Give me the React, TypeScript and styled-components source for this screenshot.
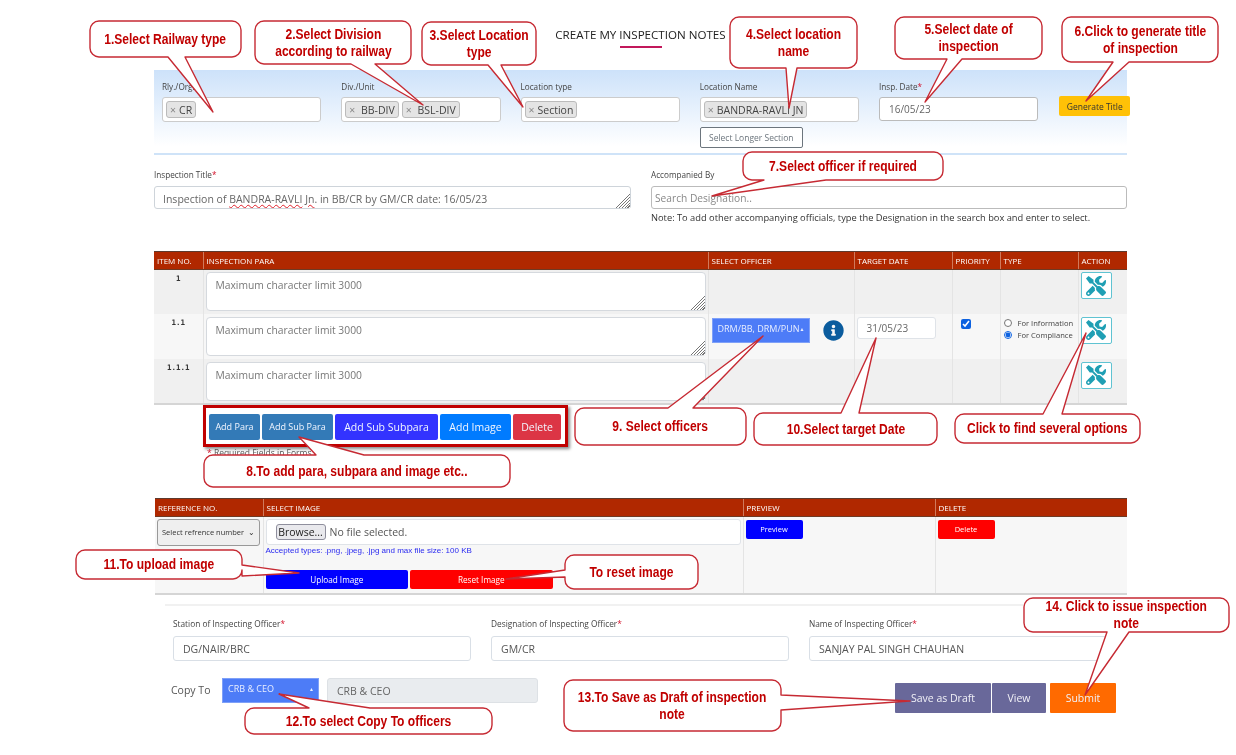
import React from 'react';
import styled, { createGlobalStyle, css } from 'styled-components';
import { FaInfoCircle, FaTools } from 'react-icons/fa';

const GlobalStyle = createGlobalStyle`
  html, body {
    margin: 0;
    padding: 0;
    background: #fff;
  }
  * {
    box-sizing: border-box;
  }
`;

const uiFont = `"Open Sans", "Noto Sans", sans-serif`;

const stripedGrip = css`
  &::-webkit-resizer {
    background: linear-gradient(135deg, #fff 48%, transparent 48%),
      repeating-linear-gradient(135deg, #fff 0 1px, #777 1px 2px);
  }
`;

const Page = styled.div`
  position: relative;
  width: 1236px;
  height: 755px;
  overflow: hidden;
  background: #fff;
  font-family: ${uiFont};
  color: #495057;
  filter: blur(0.5px);
`;

const Content = styled.div`
  width: 973px;
  margin-left: 154px;
`;

const Heading = styled.div`
  height: 70px;
  padding-top: 28px;
  display: flex;
  flex-direction: column;
  align-items: center;
`;

const HeadingText = styled.h1`
  margin: 0;
  font-size: 11.6px;
  line-height: 14px;
  font-weight: 400;
  color: #222;
  white-space: nowrap;
`;

const HeadingRule = styled.div`
  width: 42px;
  height: 2px;
  margin-top: 4px;
  background: #c2185b;
`;

const FilterPanel = styled.section`
  height: 85px;
  padding: 12px 8px 0;
  display: grid;
  grid-template-columns: repeat(5, 159.25px) 71px;
  column-gap: 20px;
  align-items: start;
  background: linear-gradient(#cde2fa, #fff 92%);
  border-bottom: 2px solid #cfe3f8;
`;

const Label = styled.label`
  display: block;
  height: 10px;
  margin-bottom: 5px;
  font-size: 8.2px;
  line-height: 10px;
  color: #444;
  white-space: nowrap;
`;

const Req = styled.span`
  color: #d3112a;
`;

const ChipBox = styled.div`
  height: 25px;
  padding: 3px;
  display: flex;
  gap: 3px;
  background: #fff;
  border: 1px solid #ccc;
  border-radius: 3px;
`;

const Chip = styled.span`
  height: 17px;
  padding: 0 3px;
  display: inline-flex;
  align-items: center;
  gap: 3px;
  background: #e4e4e4;
  border: 1px solid #bbb;
  border-radius: 3px;
  font-size: 10.5px;
  color: #444;
  white-space: nowrap;

  i {
    font-style: normal;
    color: #888;
  }
`;

const DateBox = styled.div`
  height: 24px;
  padding-left: 9px;
  display: flex;
  align-items: center;
  background: #fff;
  border: 1px solid #bbb;
  border-radius: 3px;
  font-size: 10px;
  color: #666;
`;

const LongerButton = styled.button`
  display: block;
  width: 103px;
  height: 21px;
  margin-top: 5px;
  padding: 0;
  background: #fff;
  border: 1px solid #6c757d;
  border-radius: 2px;
  font: 8.5px ${uiFont};
  color: #6c757d;
`;

const GenerateButton = styled.button`
  width: 71px;
  height: 20px;
  margin: 14px 0 0 1px;
  padding: 0;
  background: #ffc107;
  border: 0;
  border-radius: 2px;
  font: 8.5px ${uiFont};
  color: #333;
`;

const TitleRow = styled.section`
  margin-top: 15px;
  display: grid;
  grid-template-columns: 477px 476px;
  column-gap: 20px;
`;

const TitleLabel = styled(Label)`
  margin-bottom: 6px;
`;

const TitleBox = styled.div`
  height: 23px;
  padding: 0 8px;
  line-height: 25px;
  background: #fff;
  border: 1px solid #ced4da;
  border-radius: 3px;
  font-size: 10.5px;
  color: #666;
  overflow: hidden;
  resize: both;
  white-space: nowrap;
  ${stripedGrip}
`;

const Misspelt = styled.span`
  text-decoration: underline wavy #e0202a 1px;
`;

const SearchBox = styled.div`
  height: 23px;
  padding-left: 3px;
  display: flex;
  align-items: center;
  background: #fff;
  border: 1px solid #bbb;
  border-radius: 3px;
  font-size: 10.2px;
  color: #888;
`;

const Note = styled.div`
  height: 13px;
  padding-top: 3px;
  font-size: 9.3px;
  line-height: 11px;
  color: #333;
  white-space: nowrap;
`;

const Grid = styled.table`
  table-layout: fixed;
  border-collapse: collapse;
  background: #f7f7f7;
  border-bottom: 2px solid #d5d5d5;
`;

const ParaGrid = styled(Grid)`
  width: 973px;
  margin-top: 29px;
`;

const HeadCell = styled.th`
  height: 18px;
  padding: 0 3px;
  background: #b02800;
  border-top: 1px solid #5d3a2e;
  border-left: 1px solid #d07a5c;
  border-bottom: 1px solid #6e3a24;
  font-size: 8px;
  font-weight: 400;
  color: #fff;
  text-align: left;
  white-space: nowrap;

  &:first-child {
    border-left: 0;
  }
`;

const ParaRow = styled.tr<{ $shade?: boolean; $h: number; $inset: number }>`
  --inset: ${(p) => p.$inset}px;
  height: ${(p) => p.$h}px;
  background: ${(p) => (p.$shade ? '#f0f0f0' : '#f7f7f7')};
`;

const Cell = styled.td`
  padding: var(--inset, 2px) 2px 2px;
  vertical-align: top;
  border-left: 1px solid #e4e4e4;
  font-size: 8px;

  &:first-child {
    border-left: 0;
  }
`;

const ItemCell = styled(Cell)`
  padding-top: 4px;
  font-family: "DejaVu Sans Mono", monospace;
  font-size: 7.5px;
  font-weight: 700;
  color: #333;
  text-align: center;
`;

const ParaArea = styled.textarea`
  display: block;
  width: 500px;
  height: 39px;
  padding: 5px 9px;
  background: #fff;
  border: 1px solid #d5d9de;
  border-radius: 4px;
  font: 10.3px ${uiFont};
  ${stripedGrip}

  &::placeholder {
    color: #777;
    opacity: 1;
  }
`;

const OfficerCell = styled(Cell)`
  padding: 4px 3px 0 3px;
`;

const OfficerWrap = styled.div`
  display: flex;
  align-items: center;
  gap: 13px;
`;

const PickerButton = styled.button<{ $w: number }>`
  width: ${(p) => p.$w}px;
  height: 25px;
  padding: 0 4px 0 5px;
  display: flex;
  align-items: flex-start;
  justify-content: space-between;
  background: #4d7cf7;
  border: 1px solid #7ea0f8;
  font: 9px/19px ${uiFont};
  color: #e8eeff;
  white-space: nowrap;

  span:last-child {
    flex: none;
    font-size: 5px;
    line-height: 21px;
  }
`;

const DateInput = styled.div`
  width: 79px;
  height: 22px;
  padding-left: 9px;
  display: flex;
  align-items: center;
  background: #fff;
  border: 1px solid #dfe3e8;
  border-radius: 3px;
  font-size: 10px;
  color: #666;
`;

const PriorityCell = styled(Cell)`
  padding: 5px 0 0 8px;
`;

const PriorityBox = styled.input`
  display: block;
  width: 10px;
  height: 10px;
  margin: 0;
  accent-color: #0d62e0;
`;

const TypeOption = styled.label`
  height: 12.5px;
  display: flex;
  align-items: center;
  gap: 6px;
  font-size: 7.6px;
  color: #444;
  white-space: nowrap;

  input {
    width: 8px;
    height: 8px;
    margin: 0;
    accent-color: #0d62e0;
  }
`;

const TypeCell = styled(Cell)`
  padding: 3px 0 0 3px;
`;

const ToolButton = styled.button`
  width: 31px;
  height: 27px;
  padding: 0;
  display: flex;
  align-items: center;
  justify-content: center;
  background: #fff;
  border: 1px solid #5fc3d2;
  border-radius: 2px;
  color: #1f9fb4;
  font-size: 20px;
`;

const Toolbar = styled.div`
  width: 365px;
  height: 42px;
  margin-left: 49px;
  padding: 6px 3px;
  display: flex;
  gap: 2px;
  background: #fff;
  border: 3px solid #c00000;
  box-shadow: 2px 2px 3px #8a8a8a;
`;

const ActionButton = styled.button<{ $w: number; $bg: string; $size: number }>`
  width: ${(p) => p.$w}px;
  height: 26px;
  padding: 0;
  flex: none;
  background: ${(p) => p.$bg};
  border: 0;
  border-radius: 2px;
  font: ${(p) => p.$size}px ${uiFont};
  color: #f2f6ff;
`;

const Required = styled.div`
  height: 11px;
  margin-left: 53px;
  font-size: 8.5px;
  line-height: 11px;
  color: #555;
`;

const ImageGrid = styled(Grid)`
  width: 972px;
  margin: 40px 0 0 1px;
`;

const ImageRow = styled.tr`
  height: 78px;
`;

const RefSelect = styled.div`
  width: 103px;
  height: 27px;
  padding: 0 4px;
  display: flex;
  align-items: center;
  justify-content: space-between;
  background: #efefef;
  border: 1px solid #999;
  border-radius: 3px;
  font-size: 7.5px;
  color: #333;
  white-space: nowrap;
`;

const FileBox = styled.div`
  height: 26px;
  padding-left: 9px;
  display: flex;
  align-items: center;
  gap: 4px;
  background: #fff;
  border: 1px solid #dfe3e8;
  border-radius: 3px;
  font-size: 10.5px;
  color: #555;
`;

const BrowseButton = styled.button`
  width: 50px;
  height: 16px;
  padding: 0;
  background: #e9e9ed;
  border: 1px solid #8f8f9d;
  border-radius: 3px;
  font: 10.5px ${uiFont};
  color: #222;
`;

const Accepted = styled.div`
  height: 25px;
  padding-top: 1px;
  font-family: "Liberation Sans", sans-serif;
  font-size: 8px;
  line-height: 10px;
  color: #2a2af0;
`;

const UploadRow = styled.div`
  display: flex;
  gap: 2px;
`;

const WideButton = styled.button<{ $bg: string }>`
  width: 142.5px;
  height: 19px;
  padding: 0;
  background: ${(p) => p.$bg};
  border: 0;
  border-radius: 2px;
  font: 8.2px ${uiFont};
  color: #fff;
`;

const SmallButton = styled.button<{ $bg: string }>`
  display: block;
  width: 57px;
  height: 19px;
  margin: 1px 0 0;
  padding: 0;
  background: ${(p) => p.$bg};
  border: 0;
  border-radius: 2px;
  font: 7.5px ${uiFont};
  color: #fff;
`;

const Divider = styled.hr`
  height: 2px;
  margin: 9px 0 0 11px;
  background: #f1f1f1;
  border: 0;
`;

const OfficerRow = styled.section`
  margin-top: 13px;
  padding-left: 19px;
  display: grid;
  grid-template-columns: repeat(3, 298px);
  column-gap: 20px;
`;

const OfficerLabel = styled(Label)`
  margin-bottom: 7px;
  font-size: 8.3px;
`;

const TextBox = styled.div`
  height: 25px;
  padding-left: 9px;
  display: flex;
  align-items: center;
  background: #fff;
  border: 1px solid #d9dfe6;
  border-radius: 3px;
  font-size: 10.5px;
  color: #555;
  white-space: nowrap;
`;

const CopyRow = styled.section`
  margin-top: 17px;
  padding: 0 11px 0 17px;
  display: flex;
  align-items: flex-start;
`;

const CopyLabel = styled.span`
  width: 51px;
  font-size: 10.5px;
  line-height: 25px;
  color: #555;
`;

const CopyValue = styled.div`
  width: 211px;
  height: 25px;
  margin-left: 8px;
  padding-left: 9px;
  display: flex;
  align-items: center;
  background: #e9ecef;
  border: 1px solid #dde1e5;
  border-radius: 3px;
  font-size: 10.5px;
  color: #666;
`;

const FormActions = styled.div`
  margin: 5px 0 0 auto;
  display: flex;
`;

const FormButton = styled.button<{ $w: number; $bg: string; $gap?: number }>`
  width: ${(p) => p.$w}px;
  height: 30px;
  margin-left: ${(p) => p.$gap ?? 0}px;
  padding: 0;
  background: ${(p) => p.$bg};
  border: 0;
  border-radius: 1px;
  font: 10.5px ${uiFont};
  color: #f1f1f7;
`;

/* callouts lie over the form, each one is drawn as a single shape with its tail */
const Annotations = styled.div`
  position: absolute;
  inset: 0;
  pointer-events: none;
`;

const Bubble = styled.div<{ $x: number; $y: number; $w: number; $h: number }>`
  position: absolute;
  left: ${(p) => p.$x}px;
  top: ${(p) => p.$y}px;
  width: ${(p) => p.$w}px;
  height: ${(p) => p.$h}px;
  display: flex;
  align-items: center;
  justify-content: center;

  svg {
    position: absolute;
    left: 0;
    top: 0;
    overflow: visible;
  }
`;

const BubbleText = styled.div`
  position: relative;
  flex: none;
  width: 130%;
  transform: scaleX(0.86);
  font-family: "Liberation Sans", Arial, sans-serif;
  font-size: 14px;
  font-weight: 700;
  line-height: 17px;
  color: #c00000;
  text-align: center;
`;

type Tail = {
  side: 'top' | 'right' | 'bottom' | 'left';
  from: number;
  to: number;
  tip: [number, number];
};

type Note = {
  x: number;
  y: number;
  w: number;
  h: number;
  text: React.ReactNode;
  tail?: Tail;
};

const notes: Note[] = [
  { x: 90, y: 21, w: 151, h: 36, text: '1.Select Railway type', tail: { side: 'bottom', from: 168, to: 185, tip: [213, 112] } },
  { x: 255, y: 21, w: 156, h: 43, text: <>2.Select Division<br />according to railway</>, tail: { side: 'bottom', from: 351, to: 375, tip: [423, 105] } },
  { x: 422, y: 22, w: 114, h: 43, text: <>3.Select Location<br />type</>, tail: { side: 'bottom', from: 488, to: 501, tip: [523, 107] } },
  { x: 730, y: 17, w: 127, h: 51, text: <>4.Select location<br />name</>, tail: { side: 'bottom', from: 786, to: 797, tip: [789, 108] } },
  { x: 895, y: 17, w: 147, h: 42, text: <>5.Select date of<br />inspection</>, tail: { side: 'bottom', from: 947, to: 962, tip: [925, 102] } },
  { x: 1062, y: 17, w: 156, h: 45, text: <>6.Click to generate title<br />of inspection</>, tail: { side: 'bottom', from: 1113, to: 1129, tip: [1086, 101] } },
  { x: 743, y: 152, w: 200, h: 28, text: '7.Select officer if required', tail: { side: 'bottom', from: 764, to: 826, tip: [712, 196] } },
  { x: 204, y: 455, w: 306, h: 32, text: '8.To add para, subpara and image etc..', tail: { side: 'top', from: 316, to: 364, tip: [299, 437] } },
  { x: 575, y: 408, w: 171, h: 37, text: '9. Select officers', tail: { side: 'top', from: 668, to: 693, tip: [763, 336] } },
  { x: 754, y: 413, w: 183, h: 32, text: '10.Select target Date', tail: { side: 'top', from: 841, to: 859, tip: [876, 338] } },
  { x: 955, y: 414, w: 185, h: 29, text: 'Click to find several options', tail: { side: 'top', from: 1043, to: 1062, tip: [1086, 333] } },
  { x: 76, y: 550, w: 166, h: 29, text: '11.To upload image', tail: { side: 'right', from: 565, to: 576, tip: [299, 573] } },
  { x: 565, y: 555, w: 133, h: 34, text: 'To reset image', tail: { side: 'left', from: 570, to: 577, tip: [506, 579] } },
  { x: 245, y: 708, w: 247, h: 26, text: '12.To select Copy To officers', tail: { side: 'top', from: 309, to: 370, tip: [279, 694] } },
  { x: 564, y: 680, w: 217, h: 51, text: <>13.To Save as Draft of inspection<br />note</>, tail: { side: 'right', from: 695, to: 710, tip: [910, 701] } },
  { x: 1024, y: 598, w: 205, h: 34, text: <>14. Click to issue inspection<br />note</>, tail: { side: 'bottom', from: 1107, to: 1129, tip: [1085, 695] } },
];

const bubblePath = ({ x, y, w, h, tail }: Note) => {
  const r = 9;
  const tipAt = tail ? `${tail.tip[0] - x},${tail.tip[1] - y}` : '';
  const arc = (ex: number, ey: number) => `A${r},${r} 0 0 1 ${ex},${ey}`;
  const top = tail?.side === 'top' ? `L${tail.from - x},0 L${tipAt} L${tail.to - x},0` : '';
  const right = tail?.side === 'right' ? `L${w},${tail.from - y} L${tipAt} L${w},${tail.to - y}` : '';
  const bottom = tail?.side === 'bottom' ? `L${tail.to - x},${h} L${tipAt} L${tail.from - x},${h}` : '';
  const left = tail?.side === 'left' ? `L0,${tail.to - y} L${tipAt} L0,${tail.from - y}` : '';
  return [
    `M${r},0`, top, `L${w - r},0`, arc(w, r),
    right, `L${w},${h - r}`, arc(w - r, h),
    bottom, `L${r},${h}`, arc(0, h - r),
    left, `L0,${r}`, arc(r, 0), 'Z',
  ].join(' ');
};

const Callout = (note: Note) => (
  <Bubble $x={note.x} $y={note.y} $w={note.w} $h={note.h}>
    <svg width={note.w} height={note.h}>
      <path d={bubblePath(note)} fill="#fff" stroke="#c62a33" strokeWidth="1.4" strokeLinejoin="round" />
    </svg>
    <BubbleText>{note.text}</BubbleText>
  </Bubble>
);

const paraCols = [49, 505, 146, 98, 48, 78, 49];
const imageCols = [108, 480, 192, 192];

const ChipItem = ({ children }: { children: React.ReactNode }) => (
  <Chip>
    <i>×</i>
    {children}
  </Chip>
);

const ToolCell = () => (
  <Cell>
    <ToolButton>
      <FaTools />
    </ToolButton>
  </Cell>
);

const App = () => {
  return (
    <Page>
      <GlobalStyle />
      <Content>
        <Heading>
          <HeadingText>CREATE MY INSPECTION NOTES</HeadingText>
          <HeadingRule />
        </Heading>

        <FilterPanel>
          <div>
            <Label>Rly./Org.</Label>
            <ChipBox>
              <ChipItem>CR</ChipItem>
            </ChipBox>
          </div>
          <div>
            <Label>Div./Unit</Label>
            <ChipBox>
              <ChipItem>&nbsp;BB-DIV</ChipItem>
              <ChipItem>&nbsp;BSL-DIV</ChipItem>
            </ChipBox>
          </div>
          <div>
            <Label>Location type</Label>
            <ChipBox>
              <ChipItem>Section</ChipItem>
            </ChipBox>
          </div>
          <div>
            <Label>Location Name</Label>
            <ChipBox>
              <ChipItem>BANDRA-RAVLI JN</ChipItem>
            </ChipBox>
            <LongerButton>Select Longer Section</LongerButton>
          </div>
          <div>
            <Label>
              Insp. Date<Req>*</Req>
            </Label>
            <DateBox>16/05/23</DateBox>
          </div>
          <GenerateButton>Generate Title</GenerateButton>
        </FilterPanel>

        <TitleRow>
          <div>
            <TitleLabel>
              Inspection Title<Req>*</Req>
            </TitleLabel>
            <TitleBox>
              Inspection of <Misspelt>BANDRA-RAVLI</Misspelt> <Misspelt>Jn</Misspelt>. in BB/CR by GM/CR date: 16/05/23
            </TitleBox>
          </div>
          <div>
            <TitleLabel>Accompanied By</TitleLabel>
            <SearchBox>Search Designation..</SearchBox>
            <Note>Note: To add other accompanying officials, type the Designation in the search box and enter to select.</Note>
          </div>
        </TitleRow>

        <ParaGrid>
          <colgroup>
            {paraCols.map((w, i) => (
              <col key={i} width={w} />
            ))}
          </colgroup>
          <thead>
            <tr>
              <HeadCell>ITEM NO.</HeadCell>
              <HeadCell>INSPECTION PARA</HeadCell>
              <HeadCell>SELECT OFFICER</HeadCell>
              <HeadCell>TARGET DATE</HeadCell>
              <HeadCell>PRIORITY</HeadCell>
              <HeadCell>TYPE</HeadCell>
              <HeadCell>ACTION</HeadCell>
            </tr>
          </thead>
          <tbody>
            <ParaRow $shade $h={44} $inset={2}>
              <ItemCell>1</ItemCell>
              <Cell>
                <ParaArea placeholder="Maximum character limit 3000" />
              </Cell>
              <Cell />
              <Cell />
              <Cell />
              <Cell />
              <ToolCell />
            </ParaRow>
            <ParaRow $h={45} $inset={3}>
              <ItemCell>1.1</ItemCell>
              <Cell>
                <ParaArea placeholder="Maximum character limit 3000" />
              </Cell>
              <OfficerCell>
                <OfficerWrap>
                  <PickerButton $w={98}>
                    <span>DRM/BB, DRM/PUN</span>
                    <span>▲</span>
                  </PickerButton>
                  <FaInfoCircle size={21} color="#0b5c9e" />
                </OfficerWrap>
              </OfficerCell>
              <Cell>
                <DateInput>31/05/23</DateInput>
              </Cell>
              <PriorityCell>
                <PriorityBox type="checkbox" checked readOnly />
              </PriorityCell>
              <TypeCell>
                <TypeOption>
                  <input type="radio" name="kind" readOnly />
                  For Information
                </TypeOption>
                <TypeOption>
                  <input type="radio" name="kind" checked readOnly />
                  For Compliance
                </TypeOption>
              </TypeCell>
              <ToolCell />
            </ParaRow>
            <ParaRow $shade $h={45} $inset={3}>
              <ItemCell>1.1.1</ItemCell>
              <Cell>
                <ParaArea placeholder="Maximum character limit 3000" />
              </Cell>
              <Cell />
              <Cell />
              <Cell />
              <Cell />
              <ToolCell />
            </ParaRow>
          </tbody>
        </ParaGrid>

        <Toolbar>
          <ActionButton $w={51} $bg="#337ab7" $size={9}>Add Para</ActionButton>
          <ActionButton $w={71} $bg="#337ab7" $size={9}>Add Sub Para</ActionButton>
          <ActionButton $w={103} $bg="#3333ff" $size={10.5}>Add Sub Subpara</ActionButton>
          <ActionButton $w={71} $bg="#007bff" $size={10.5}>Add Image</ActionButton>
          <ActionButton $w={48} $bg="#dc3545" $size={10.5}>Delete</ActionButton>
        </Toolbar>
        <Required>
          <Req>*</Req> Required Fields in Forms
        </Required>

        <ImageGrid>
          <colgroup>
            {imageCols.map((w, i) => (
              <col key={i} width={w} />
            ))}
          </colgroup>
          <thead>
            <tr>
              <HeadCell>REFERENCE NO.</HeadCell>
              <HeadCell>SELECT IMAGE</HeadCell>
              <HeadCell>PREVIEW</HeadCell>
              <HeadCell>DELETE</HeadCell>
            </tr>
          </thead>
          <tbody>
            <ImageRow>
              <Cell>
                <RefSelect>
                  Select refrence number <span>⌄</span>
                </RefSelect>
              </Cell>
              <Cell>
                <FileBox>
                  <BrowseButton>Browse...</BrowseButton>
                  No file selected.
                </FileBox>
                <Accepted>Accepted types: .png, .jpeg, .jpg and max file size: 100 KB</Accepted>
                <UploadRow>
                  <WideButton $bg="#0000ff">Upload Image</WideButton>
                  <WideButton $bg="#ff0000">Reset Image</WideButton>
                </UploadRow>
              </Cell>
              <Cell>
                <SmallButton $bg="#0000ff">Preview</SmallButton>
              </Cell>
              <Cell>
                <SmallButton $bg="#ff0000">Delete</SmallButton>
              </Cell>
            </ImageRow>
          </tbody>
        </ImageGrid>

        <Divider />

        <OfficerRow>
          <div>
            <OfficerLabel>
              Station of Inspecting Officer<Req>*</Req>
            </OfficerLabel>
            <TextBox>DG/NAIR/BRC</TextBox>
          </div>
          <div>
            <OfficerLabel>
              Designation of Inspecting Officer<Req>*</Req>
            </OfficerLabel>
            <TextBox>GM/CR</TextBox>
          </div>
          <div>
            <OfficerLabel>
              Name of Inspecting Officer<Req>*</Req>
            </OfficerLabel>
            <TextBox>SANJAY PAL SINGH CHAUHAN</TextBox>
          </div>
        </OfficerRow>

        <CopyRow>
          <CopyLabel>Copy To</CopyLabel>
          <PickerButton $w={97}>
            <span>CRB &amp; CEO</span>
            <span>▲</span>
          </PickerButton>
          <CopyValue>CRB &amp; CEO</CopyValue>
          <FormActions>
            <FormButton $w={96} $bg="#69689a">Save as Draft</FormButton>
            <FormButton $w={54} $bg="#69689a" $gap={1}>View</FormButton>
            <FormButton $w={66} $bg="#ff6a00" $gap={4}>Submit</FormButton>
          </FormActions>
        </CopyRow>
      </Content>

      <Annotations>
        {notes.map((note, i) => (
          <Callout key={i} {...note} />
        ))}
      </Annotations>
    </Page>
  );
};

export default App;
